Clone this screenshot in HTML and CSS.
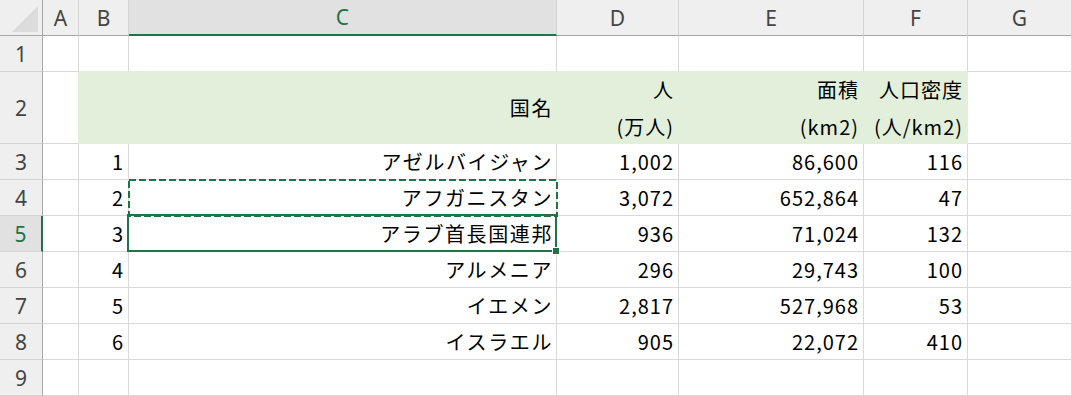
FILE: index.html
```html
<!DOCTYPE html>
<html lang="ja">

<head>
  <meta charset="UTF-8">
  <meta name="viewport" content="width=device-width, initial-scale=1.0">
  <title>国別人口密度</title>
  <link rel="stylesheet" href="styles.css">
</head>

<body>
  <div class="sheet">
    <!-- column headers -->
    <div class="corner"></div>
    <div class="hd">A</div>
    <div class="hd">B</div>
    <div class="hd hd-sel">C</div>
    <div class="hd">D</div>
    <div class="hd">E</div>
    <div class="hd">F</div>
    <div class="hd">G</div>

    <!-- row 1 -->
    <div class="rh">1</div>
    <div class="c"></div>
    <div class="c above-fill"></div>
    <div class="c above-fill"></div>
    <div class="c above-fill"></div>
    <div class="c above-fill"></div>
    <div class="c above-fill"></div>
    <div class="c"></div>

    <!-- row 2 -->
    <div class="rh">2</div>
    <div class="c left-of-fill"></div>
    <div class="c fill"></div>
    <div class="c fill name">国名</div>
    <div class="c fill two"><span>人</span><span>(万人)</span></div>
    <div class="c fill two"><span>面積</span><span>(km2)</span></div>
    <div class="c fill two"><span>人口密度</span><span>(人/km2)</span></div>
    <div class="c"></div>

    <!-- row 3 -->
    <div class="rh">3</div>
    <div class="c"></div>
    <div class="c">1</div>
    <div class="c name">アゼルバイジャン</div>
    <div class="c">1,002</div>
    <div class="c">86,600</div>
    <div class="c">116</div>
    <div class="c"></div>

    <!-- row 4 -->
    <div class="rh">4</div>
    <div class="c"></div>
    <div class="c">2</div>
    <div class="c name">アフガニスタン
      <svg class="marquee" width="430" height="38" viewBox="0 0 430 38">
        <rect x="1" y="1" width="428" height="36" fill="none" stroke="#217346" stroke-width="2" stroke-dasharray="7 3"/>
      </svg>
    </div>
    <div class="c">3,072</div>
    <div class="c">652,864</div>
    <div class="c">47</div>
    <div class="c"></div>

    <!-- row 5 -->
    <div class="rh rh-sel">5</div>
    <div class="c"></div>
    <div class="c">3</div>
    <div class="c name active">アラブ首長国連邦</div>
    <div class="c">936</div>
    <div class="c">71,024</div>
    <div class="c">132</div>
    <div class="c"></div>

    <!-- row 6 -->
    <div class="rh">6</div>
    <div class="c"></div>
    <div class="c">4</div>
    <div class="c name">アルメニア</div>
    <div class="c">296</div>
    <div class="c">29,743</div>
    <div class="c">100</div>
    <div class="c"></div>

    <!-- row 7 -->
    <div class="rh">7</div>
    <div class="c"></div>
    <div class="c">5</div>
    <div class="c name">イエメン</div>
    <div class="c">2,817</div>
    <div class="c">527,968</div>
    <div class="c">53</div>
    <div class="c"></div>

    <!-- row 8 -->
    <div class="rh">8</div>
    <div class="c"></div>
    <div class="c">6</div>
    <div class="c name">イスラエル</div>
    <div class="c">905</div>
    <div class="c">22,072</div>
    <div class="c">410</div>
    <div class="c"></div>

    <!-- row 9 -->
    <div class="rh">9</div>
    <div class="c"></div>
    <div class="c"></div>
    <div class="c"></div>
    <div class="c"></div>
    <div class="c"></div>
    <div class="c"></div>
    <div class="c"></div>
  </div>
</body>

</html>
```

FILE: styles.css
```css
body {
  margin: 0;
  background-color: #fff;
  font-family: "Noto Sans CJK JP", "Noto Sans", sans-serif;
}

.sheet {
  display: grid;
  grid-template-columns: 43px 36px 50px 428px 122px 185px 104px 104px;
  grid-template-rows: 36px 36px 72px repeat(7, 36px);
  width: 1072px;
  height: 396px;
  overflow: hidden;
}

.sheet > div {
  box-sizing: border-box;
  position: relative;
}

/* headers */
.corner {
  background-color: #efefef;
  border-right: 1px solid #a6a6a6;
  border-bottom: 1px solid #a6a6a6;
}

.corner::after {
  content: "";
  position: absolute;
  right: 4px;
  bottom: 3px;
  width: 26px;
  height: 26px;
  background-color: #dcdcdc;
  clip-path: polygon(100% 0, 100% 100%, 0 100%);
}

.hd,
.rh {
  display: flex;
  align-items: center;
  justify-content: center;
  background-color: #efefef;
  color: #444;
  font-family: "Noto Sans", sans-serif;
  font-size: 21px;
}

.hd {
  border-right: 1px solid #d4d4d4;
  border-bottom: 1px solid #a6a6a6;
}

.rh {
  border-right: 1px solid #a6a6a6;
  border-bottom: 1px solid #d4d4d4;
}

.hd-sel {
  background-color: #e1e1e1;
  color: #217346;
  border-bottom: 2px solid #217346;
}

.rh-sel {
  background-color: #e1e1e1;
  color: #217346;
  border-right: 2px solid #217346;
}

/* cells */
.c {
  display: flex;
  align-items: center;
  justify-content: flex-end;
  padding: 0 4px 0 0;
  border-right: 1px solid #d9d9d9;
  border-bottom: 1px solid #d9d9d9;
  color: #000;
  font-size: 20px;
  letter-spacing: 1px;
  white-space: nowrap;
}

.name {
  letter-spacing: 1.6px;
  padding-right: 3px;
}

.fill {
  background-color: #e2efda;
  border-color: #e2efda;
}

.above-fill {
  border-bottom-color: #e2efda;
}

.left-of-fill {
  border-right-color: #e2efda;
}

.two {
  flex-direction: column;
  align-items: flex-end;
  justify-content: center;
  line-height: 37px;
}

/* copy marquee */
.marquee {
  position: absolute;
  left: -1px;
  top: -1px;
  z-index: 2;
}

/* active cell */
.active::after {
  content: "";
  position: absolute;
  left: -2px;
  top: -2px;
  right: -1px;
  bottom: -1px;
  border: 2px solid #217346;
  z-index: 3;
}

.active::before {
  content: "";
  position: absolute;
  right: -4px;
  bottom: -4px;
  width: 6px;
  height: 6px;
  background-color: #217346;
  border: 1px solid #fff;
  z-index: 4;
}
```
